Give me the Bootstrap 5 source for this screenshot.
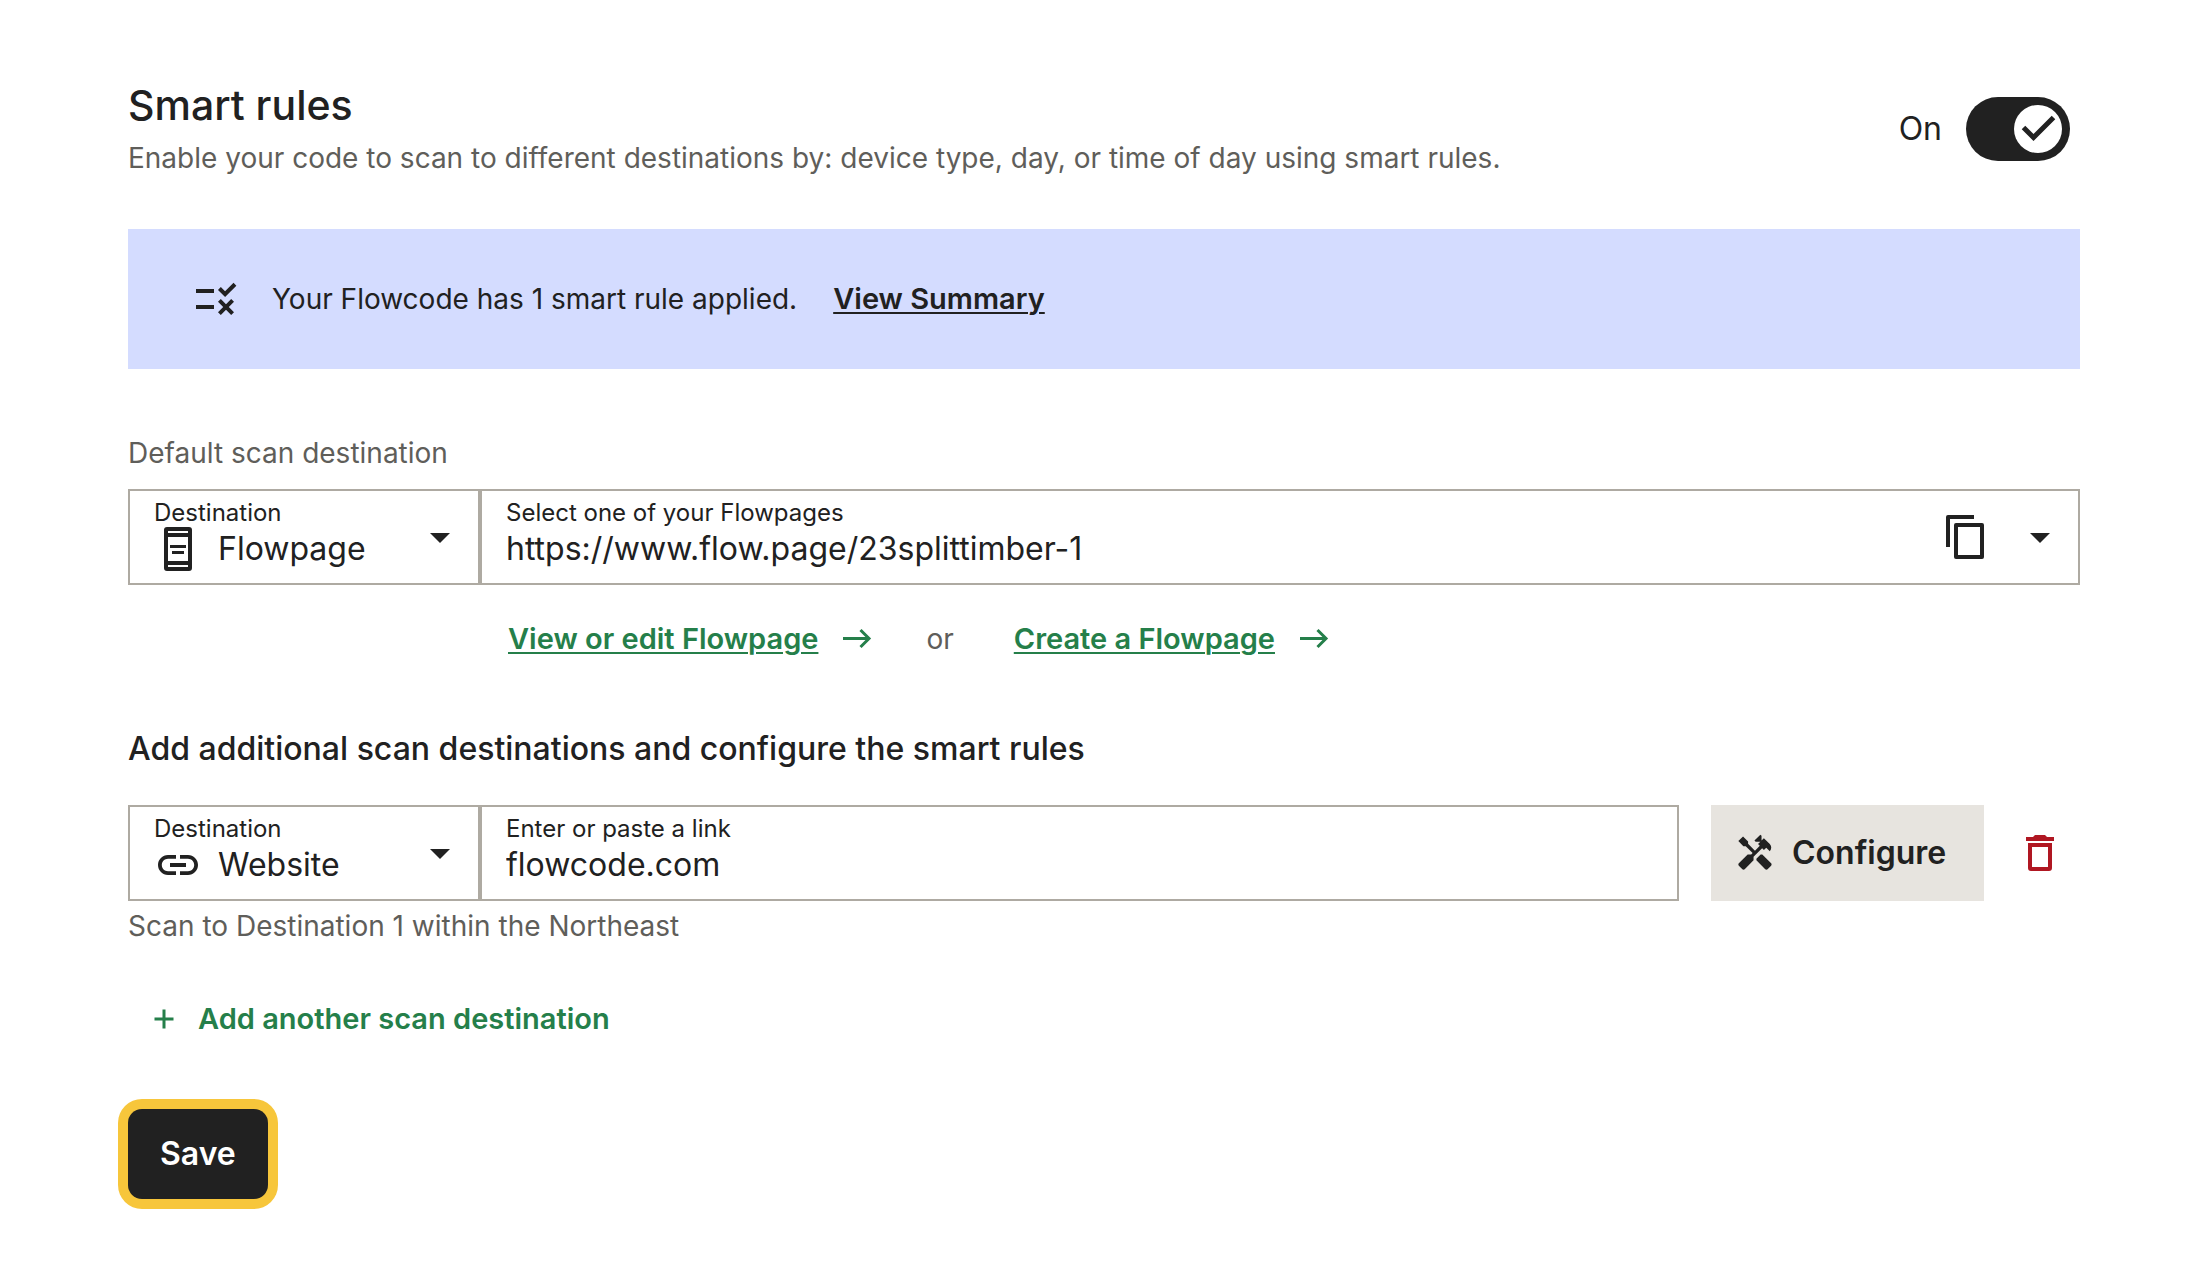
<!DOCTYPE html>
<html lang="en">
<head>
<meta charset="utf-8">
<meta name="viewport" content="width=device-width, initial-scale=1">
<title>Smart rules</title>
<link href="https://cdn.jsdelivr.net/npm/bootstrap@5.3.0/dist/css/bootstrap.min.css" rel="stylesheet">
<style>
:root{--ink:#212121;--muted:#5f5e5a;--line:#aeaaa2;--leaf:#257f4a}
body{font-family:Inter,"Liberation Sans",sans-serif;font-size:28px;line-height:40px;color:var(--ink);background:#fff}
.page-shell{padding:80px 130px 55px 128px}
.page-title{font-size:41px;line-height:50px;font-weight:500;margin:0 0 8px}
.section-title{font-size:32px;line-height:48px;font-weight:500;margin:66px 0 32px}
.quiet{color:var(--muted)}
.text-lg{font-size:32px}
svg{display:block;flex:none;fill:currentColor}
.ico{width:48px;height:48px}
.ico-md{width:40px;height:40px}
.ico-sm{width:32px;height:32px}
.toggle-wrap{padding-right:10px;gap:24px}
.toggle-wrap .toggle{appearance:none;width:104px;height:64px;margin:0;border:0;border-radius:32px;background:#bbb no-repeat left 8px center/48px 48px;cursor:pointer}
.toggle-wrap .toggle:checked{background-color:var(--ink);background-position:right 8px center;background-image:url("data:image/svg+xml,%3Csvg xmlns='http://www.w3.org/2000/svg' viewBox='0 0 48 48'%3E%3Ccircle cx='24' cy='24' r='24' fill='%23fff'/%3E%3Cpath d='M9.500 22.500l10 10 20-20' fill='none' stroke='%23212121' stroke-width='5'/%3E%3C/svg%3E")}
.notice{background:#d4dcff;padding:46px 64px;margin-top:51px;gap:32px}
.notice-text{gap:36px}
.strong-link{font-size:29px;font-weight:600;text-underline-offset:3px;text-decoration-thickness:2px}
.notice .strong-link{color:var(--ink)}
.group-label{margin:64px 0 16px}
.field-box{border:2px solid var(--line);padding:6px 14px 6px 24px;min-height:96px}
.field-kind{width:352px}
.field-main{padding-bottom:8px}
.field-box label{font-size:24px;line-height:32px;display:block}
.field-box .value-row{gap:16px;height:40px}
.field-box select,.field-box input{display:block;appearance:none;border:0;background:none;padding:0;margin:0;width:100%;min-width:0;height:40px;font-size:32px;line-height:40px;color:var(--ink);font-family:inherit}
.plain-btn{border:0;background:none;padding:0;color:inherit}
.copy-btn{margin-right:26px}
.link-row{margin:34px 0 0 380px}
.link-row .strong-link{color:var(--leaf)}
.link-row .ico-sm{margin-left:24px}
.link-row .or-word{margin:0 60px 0 52px}
.configure{background:#e7e4df;color:var(--ink);border:0;border-radius:0;font-size:32px;font-weight:600;width:273px;padding:0 24px;gap:17px;margin-left:32px;display:flex;align-items:center}
.trash{color:#b01722;margin:0 16px 0 32px}
.hint{margin-top:5px}
.add-btn{color:var(--leaf);font-size:29px;font-weight:600;margin-top:53px;padding-left:20px;gap:18px}
.save,.save:hover{background:var(--ink);color:#fff;border:0;border-radius:14px;font-size:32px;font-weight:600;line-height:48px;padding:21px 32px;margin-top:70px;box-shadow:0 0 0 10px #f7c63b}
</style>
</head>
<body>
<main class="page-shell">
  <header class="d-flex justify-content-between align-items-center">
    <div>
      <h1 class="page-title">Smart rules</h1>
      <p class="quiet mb-0">Enable your code to scan to different destinations by: device type, day, or time of day using smart rules.</p>
    </div>
    <div class="toggle-wrap d-flex align-items-center">
      <label class="text-lg" for="rulesOn">On</label>
      <input class="toggle" type="checkbox" role="switch" id="rulesOn" checked>
    </div>
  </header>

  <div class="notice d-flex align-items-center">
    <svg class="ico" viewBox="0 0 24 24" aria-hidden="true"><path d="M16.54 11L13 7.46l1.41-1.41 2.12 2.12 4.24-4.24 1.41 1.41L16.54 11zM11 7H2v2h9V7zm10 6.41L19.59 12 17 14.59 14.41 12 13 13.41 15.59 16 13 18.59 14.41 20 17 17.41 19.59 20 21 18.59 18.41 16 21 13.41zM11 15H2v2h9v-2z"/></svg>
    <div class="notice-text d-flex flex-wrap"><span>Your Flowcode has 1 smart rule applied.</span><a class="strong-link" href="#">View Summary</a></div>
  </div>

  <p class="group-label quiet">Default scan destination</p>
  <div class="d-flex">
    <div class="field-box field-kind d-flex align-items-center">
      <div class="field-main flex-grow-1">
        <label for="kind1">Destination</label>
        <div class="value-row d-flex align-items-center">
          <svg class="ico" viewBox="0 0 48 48" aria-hidden="true"><path fill-rule="evenodd" d="M13 2h22a3 3 0 0 1 3 3v38a3 3 0 0 1-3 3H13a3 3 0 0 1-3-3V5a3 3 0 0 1 3-3zm1 4v2h20V6zm0 6v24h20V12zm0 28v2h20v-2z"/><path d="M16 20h16v3H16zM18 26h12v3H18z"/></svg>
          <select id="kind1"><option>Flowpage</option><option>Website</option></select>
        </div>
      </div>
      <svg class="ico" viewBox="0 0 24 24" aria-hidden="true"><path d="M7 10l5 5 5-5z"/></svg>
    </div>
    <div class="field-box flex-grow-1 d-flex align-items-center">
      <div class="field-main flex-grow-1">
        <label for="page1">Select one of your Flowpages</label>
        <select id="page1"><option>https://www.flow.page/23splittimber-1</option></select>
      </div>
      <button class="plain-btn copy-btn" type="button" aria-label="Copy link">
        <svg class="ico" viewBox="0 0 24 24" aria-hidden="true"><path fill-rule="evenodd" d="M16 1H3a1 1 0 0 0-1 1v15h2V3h12zM7 5h13a1 1 0 0 1 1 1v16a1 1 0 0 1-1 1H7a1 1 0 0 1-1-1V6a1 1 0 0 1 1-1zm1 2v14h11V7z"/></svg>
      </button>
      <svg class="ico" viewBox="0 0 24 24" aria-hidden="true"><path d="M7 10l5 5 5-5z"/></svg>
    </div>
  </div>

  <div class="link-row d-flex align-items-center">
    <a class="strong-link" href="#">View or edit Flowpage</a>
    <svg class="ico-sm" viewBox="0 0 32 32" aria-hidden="true"><path d="M1 15.500h26M18.500 7l8.500 8.500-8.500 8.500" fill="none" stroke="#257f4a" stroke-width="3"/></svg>
    <span class="or-word quiet">or</span>
    <a class="strong-link" href="#">Create a Flowpage</a>
    <svg class="ico-sm" viewBox="0 0 32 32" aria-hidden="true"><path d="M1 15.500h26M18.500 7l8.500 8.500-8.500 8.500" fill="none" stroke="#257f4a" stroke-width="3"/></svg>
  </div>

  <h2 class="section-title">Add additional scan destinations and configure the smart rules</h2>
  <div class="d-flex">
    <div class="field-box field-kind d-flex align-items-center">
      <div class="field-main flex-grow-1">
        <label for="kind2">Destination</label>
        <div class="value-row d-flex align-items-center">
          <svg class="ico" viewBox="0 0 24 24" aria-hidden="true"><path d="M3.900 12c0-1.710 1.390-3.100 3.100-3.100h4V7H7c-2.760 0-5 2.240-5 5s2.240 5 5 5h4v-1.900H7c-1.710 0-3.100-1.390-3.100-3.100zM8 13h8v-2H8v2zm9-6h-4v1.900h4c1.710 0 3.100 1.390 3.100 3.100s-1.390 3.100-3.100 3.100h-4V17h4c2.760 0 5-2.240 5-5s-2.240-5-5-5z"/></svg>
          <select id="kind2"><option>Website</option><option>Flowpage</option></select>
        </div>
      </div>
      <svg class="ico" viewBox="0 0 24 24" aria-hidden="true"><path d="M7 10l5 5 5-5z"/></svg>
    </div>
    <div class="field-box flex-grow-1">
      <label for="link2">Enter or paste a link</label>
      <input id="link2" type="text" value="flowcode.com">
    </div>
    <button class="configure" type="button">
      <svg class="ico-md" viewBox="0 0 24 24" aria-hidden="true"><path d="M21.670 18.170l-5.300-5.300h-.99l-2.540 2.540v.99l5.300 5.300c.39.39 1.020.39 1.410 0l2.120-2.120c.39-.38.39-1.020 0-1.410zM17.340 10.190l1.410-1.410 2.120 2.120c1.170-1.170 1.170-3.070 0-4.240l-3.540-3.540-1.410 1.410V1.710L15.220 1l-3.540 3.540.71.71h2.830l-1.410 1.410 1.060 1.060-2.890 2.890-4.130-4.130V5.060L4.830 2.040 2 4.870 5.030 7.900h1.410l4.130 4.130-.85.85H7.600l-5.300 5.300c-.39.39-.39 1.020 0 1.410l2.120 2.120c.39.39 1.020.39 1.410 0l5.300-5.300v-2.120l5.150-5.150z"/></svg>
      Configure
    </button>
    <button class="plain-btn trash" type="button" aria-label="Delete destination">
      <svg class="ico" viewBox="0 0 24 24" aria-hidden="true"><path fill-rule="evenodd" d="M5 4h3.500l1-1h5l1 1H19v2H5zM6 7h12v12.500a1.500 1.500 0 0 1-1.500 1.500h-9A1.500 1.500 0 0 1 6 19.500zm2 2v10h8V9z"/></svg>
    </button>
  </div>
  <p class="hint quiet mb-0">Scan to Destination 1 within the Northeast</p>

  <button class="plain-btn add-btn d-flex align-items-center" type="button">
    <svg class="ico-sm" viewBox="0 0 32 32" aria-hidden="true"><path d="M6.500 16h19M16 6.500v19" fill="none" stroke="#257f4a" stroke-width="3"/></svg>
    Add another scan destination
  </button>
  <button class="btn save d-block" type="submit">Save</button>
</main>
<script src="https://cdn.jsdelivr.net/npm/bootstrap@5.3.0/dist/js/bootstrap.bundle.min.js"></script>
</body>
</html>
